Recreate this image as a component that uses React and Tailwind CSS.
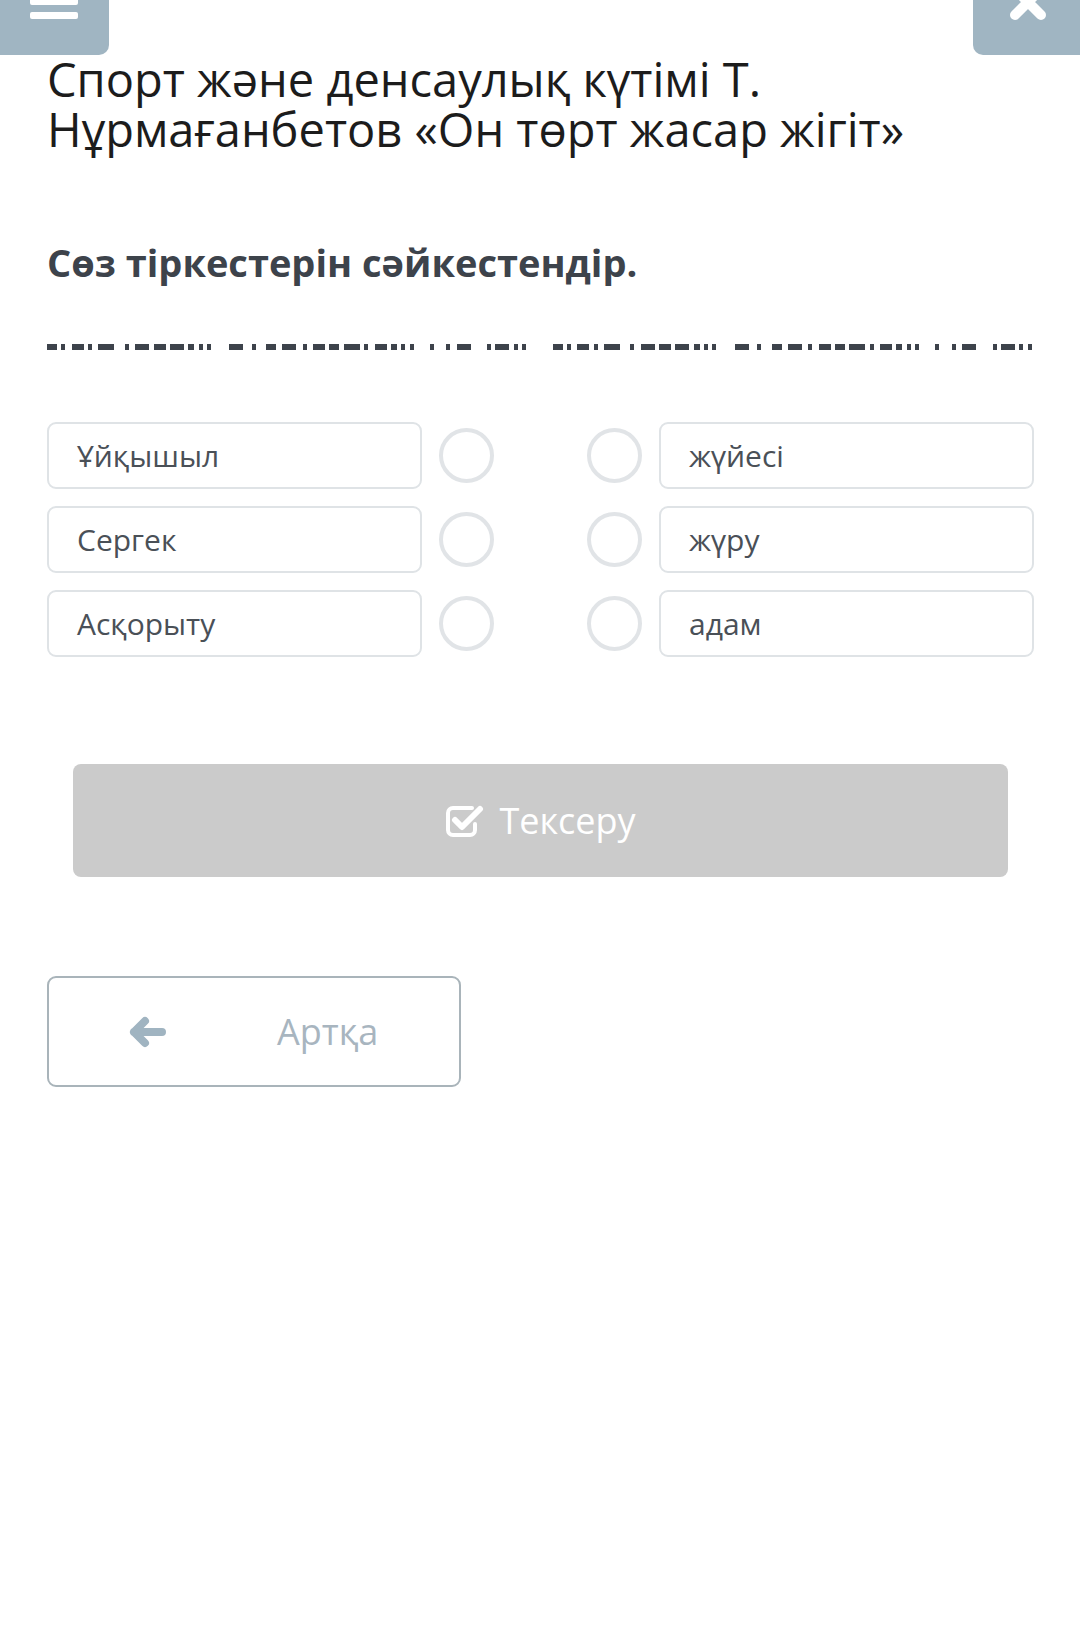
import React from "react";

const leftItems = ["Ұйқышыл", "Сергек", "Асқорыту"];
const rightItems = ["жүйесі", "жүру", "адам"];

// [width, gap before] for the garbled dashed line
const dashPattern = [
  [10, 0], [4, 4], [12, 6], [4, 4], [16, 6], [4, 10], [14, 6], [12, 4],
  [14, 4], [6, 4], [4, 4], [4, 4], [14, 18], [4, 8], [10, 10], [14, 6],
  [4, 6], [12, 6], [10, 4], [16, 4], [4, 4], [12, 6], [6, 4], [4, 4],
  [4, 4], [4, 16], [4, 12], [14, 6], [4, 16], [14, 4], [4, 4], [4, 4],
];

const DashHalf = () => (
  <div className="flex-1 flex items-center justify-between">
    {dashPattern.map(([w, g], i) => (
      <span
        key={i}
        className="h-[6px] bg-[#3d434b]"
        style={{ width: w, marginLeft: g }}
      />
    ))}
  </div>
);

const Circle = () => (
  <div className="w-[55px] h-[55px] rounded-full border-[4px] border-[#e1e4e7] shrink-0" />
);

const CheckSquareIcon = () => (
  <svg width="39" height="34" viewBox="0 0 39 34" fill="none">
    <path
      d="M27 4H8a5 5 0 0 0-5 5v17a5 5 0 0 0 5 5h17a5 5 0 0 0 5-5v-6"
      stroke="white"
      strokeWidth="4"
      strokeLinecap="round"
    />
    <path
      d="M10 16l7 7L35 5"
      stroke="white"
      strokeWidth="6"
      strokeLinecap="round"
      strokeLinejoin="round"
    />
  </svg>
);

const ArrowLeftIcon = () => (
  <svg width="38" height="32" viewBox="0 0 38 32" fill="none">
    <path
      d="M5 16L16 5M5 16l11 11M5 16h28"
      stroke="#a0b4c1"
      strokeWidth="8"
      strokeLinecap="round"
      strokeLinejoin="round"
    />
  </svg>
);

export default function App() {
  return (
    <div
      className="min-h-[1628px] bg-white"
      style={{ fontFamily: '"Open Sans", "Noto Sans", sans-serif' }}
    >
      {/* top bar buttons */}
      <div className="flex justify-between h-[55px]">
        <div className="w-[109px] h-[55px] bg-[#a0b5c2] rounded-br-[10px] overflow-hidden">
          <div className="flex flex-col gap-[7px] ml-[30px] -mt-[16px]">
            <span className="w-[48px] h-[7px] bg-white rounded-[2px]" />
            <span className="w-[48px] h-[7px] bg-white rounded-[2px]" />
            <span className="w-[48px] h-[7px] bg-white rounded-[2px]" />
          </div>
        </div>
        <div className="w-[107px] h-[55px] bg-[#a0b5c2] rounded-bl-[10px] overflow-hidden">
          <svg width="40" height="40" viewBox="0 0 40 40" className="ml-[35px] -mt-[18px]">
            <path
              d="M7 7l26 26M33 7L7 33"
              stroke="white"
              strokeWidth="10"
              strokeLinecap="round"
            />
          </svg>
        </div>
      </div>

      <div className="pl-[47px] pr-[46px]">
        <h1 className="-mt-[1px] text-[47px] leading-[50px] text-[#1c1c1c] font-normal">
          Спорт және денсаулық күтімі Т.
          <br />
          Нұрмағанбетов «Он төрт жасар жігіт»
        </h1>

        <h2 className="mt-[85px] text-[38px] leading-[46px] font-bold text-[#3d434b]">
          Сөз тіркестерін сәйкестендір.
        </h2>

        <div className="mt-[59px] flex gap-[26px] pr-[2px]">
          <DashHalf />
          <DashHalf />
        </div>

        <div className="mt-[72px] flex flex-col gap-[17px]">
          {leftItems.map((left, i) => (
            <div key={i} className="flex items-center">
              <div className="w-[375px] h-[67px] border-2 border-[#dfe3e6] rounded-[9px] flex items-center pl-[28px] text-[30px] text-[#4a5057]">
                {left}
              </div>
              <div className="ml-[17px]">
                <Circle />
              </div>
              <div className="ml-[93px]">
                <Circle />
              </div>
              <div className="ml-[17px] w-[375px] h-[67px] border-2 border-[#dfe3e6] rounded-[9px] flex items-center pl-[28px] text-[30px] text-[#4a5057]">
                {rightItems[i]}
              </div>
            </div>
          ))}
        </div>

        <div className="mt-[107px] px-[26px]">
          <button className="w-full h-[113px] bg-[#cbcbcb] rounded-[8px] flex items-center justify-center gap-[15px] text-white text-[36px]">
            <CheckSquareIcon />
            <span>Тексеру</span>
          </button>
        </div>

        <div className="mt-[99px]">
          <button className="w-[414px] h-[111px] border-2 border-[#a9b4ba] rounded-[9px] flex items-center pl-[80px]">
            <ArrowLeftIcon />
            <span className="ml-[110px] text-[36px] text-[#a8b5bf]">Артқа</span>
          </button>
        </div>
      </div>
    </div>
  );
}
